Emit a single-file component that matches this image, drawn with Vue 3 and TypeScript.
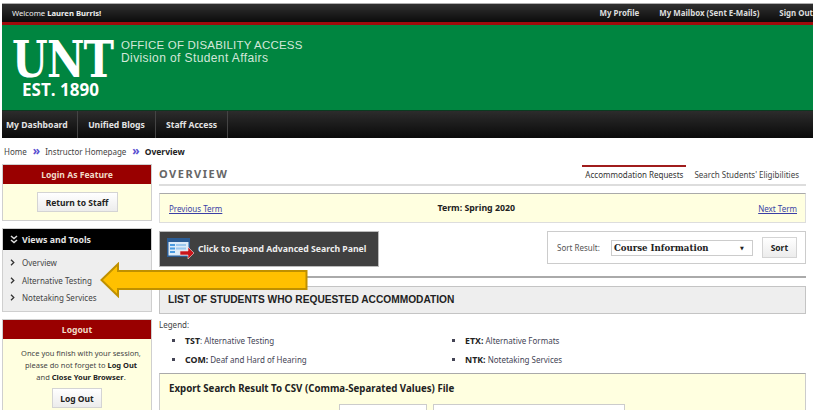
<script setup lang="ts">
const navItems: string[] = ['My Dashboard', 'Unified Blogs', 'Staff Access']
const toolItems: string[] = ['Overview', 'Alternative Testing', 'Notetaking Services']
const legendItems = [
  { code: 'TST', colon: ':', text: 'Alternative Testing' },
  { code: 'ETX:', colon: '', text: 'Alternative Formats' },
  { code: 'COM:', colon: '', text: 'Deaf and Hard of Hearing' },
  { code: 'NTK:', colon: '', text: 'Notetaking Services' },
]
</script>

<template>
  <div class="page">
    <header class="topbar">
      <span class="welcome">Welcome <b>Lauren Burris!</b></span>
      <nav class="toplinks">
        <a>My Profile</a>
        <a>My Mailbox (Sent E-Mails)</a>
        <a>Sign Out</a>
      </nav>
    </header>
    <section class="brand">
      <div class="logo">
        <div class="unt">UNT</div>
        <div class="est">EST. 1890</div>
      </div>
      <div class="office">
        <div>OFFICE OF DISABILITY ACCESS</div>
        <div>Division of Student Affairs</div>
      </div>
    </section>
    <nav class="mainnav">
      <a v-for="item in navItems" :key="item">{{ item }}</a>
    </nav>
    <div class="crumbs">
      <span>Home</span><i>»</i><span>Instructor Homepage</span><i>»</i><b>Overview</b>
    </div>

    <div class="columns">
      <aside class="side">
        <div class="panel login">
          <h3 class="red">Login As Feature</h3>
          <div class="pbody center"><button class="btn">Return to Staff</button></div>
        </div>
        <div class="panel tools">
          <h3 class="black"><span class="dbl">
            <svg width="8" height="9" viewBox="0 0 8 9"><path d="M1 1l3 2.500L7 1M1 5l3 2.500L7 5" fill="none" stroke="#ddd" stroke-width="1.500"/></svg>
          </span>Views and Tools</h3>
          <ul>
            <li v-for="item in toolItems" :key="item">
              <svg width="5" height="7" viewBox="0 0 5 7"><path d="M1 .8L3.800 3.500 1 6.200" fill="none" stroke="#333" stroke-width="1.300"/></svg>
              {{ item }}
            </li>
          </ul>
        </div>
        <div class="panel logout">
          <h3 class="red">Logout</h3>
          <div class="pbody lo">
            <p>Once you finish with your session,<br>please do not forget to <b>Log Out</b><br>and <b>Close Your Browser</b>.</p>
            <button class="btn small">Log Out</button>
          </div>
        </div>
      </aside>

      <main class="content">
        <div class="heading">
          <h2>OVERVIEW</h2>
          <div class="tabs">
            <span class="tab active">Accommodation Requests</span>
            <span class="tab">Search Students' Eligibilities</span>
          </div>
        </div>
        <div class="term">
          <a>Previous Term</a>
          <span class="termlabel"><b>Term:</b> <b>Spring 2020</b></span>
          <a>Next Term</a>
        </div>
        <div class="tools-row">
          <div class="expand">
            <svg width="28" height="22" viewBox="0 0 28 22">
              <rect x="0" y="0" width="23" height="19" fill="#2b5c94"/>
              <rect x="1.500" y="4" width="20" height="13.500" fill="#dcebf8"/>
              <rect x="3" y="6" width="5" height="2" fill="#4b9be0"/><rect x="9" y="6" width="10" height="2" fill="#9cc8ee"/>
              <rect x="3" y="9.500" width="5" height="2" fill="#4b9be0"/><rect x="9" y="9.500" width="10" height="2" fill="#9cc8ee"/>
              <rect x="3" y="13" width="5" height="2" fill="#4b9be0"/>
              <path d="M13 13h8v-4l6 6-6 6v-4h-8z" fill="#c9151b" stroke="#f1e4e4" stroke-width=".6"/>
            </svg>
            <span>Click to Expand Advanced Search Panel</span>
          </div>
          <div class="sort">
            <label>Sort Result:</label>
            <div class="select"><span>Course Information</span><em>▼</em></div>
            <button class="btn sortbtn">Sort</button>
          </div>
        </div>
        <div class="rule"></div>
        <div class="listhead">LIST OF STUDENTS WHO REQUESTED ACCOMMODATION</div>
        <div class="legend">Legend:</div>
        <ul class="legend-grid">
          <li v-for="l in legendItems" :key="l.code"><b>{{ l.code }}</b>{{ l.colon }} {{ l.text }}</li>
        </ul>
        <div class="export">
          <h4>Export Search Result To CSV (Comma-Separated Values) File</h4>
          <div class="inputs"><div class="inp a"></div><div class="inp b"></div></div>
        </div>
      </main>
    </div>

    <svg class="arrow" width="208" height="36" viewBox="0 0 208 36">
      <path d="M1.500 18L18 2v7h188.500v18H18v7z" fill="#ffc000" stroke="#bf9000" stroke-width="2"/>
    </svg>
  </div>
</template>

<style scoped>
.page {
  position: relative;
  width: 813px;
  height: 410px;
  overflow: hidden;
  background: #fff;
  padding-top: 4px;
  box-sizing: border-box;
  font-family: "Noto Sans", sans-serif;
  font-size: 8px;
  color: #333;
}
.topbar {
  height: 18px;
  margin-left: 2px;
  padding: 0 0 0 10px;
  display: flex;
  justify-content: space-between;
  align-items: center;
  background: linear-gradient(#303030, #0c0c0c);
  box-shadow: 0 -1px #b0b0b0;
  color: #f0f0f0;
  border-bottom: 3px solid #a00b0b;
}
.welcome { font-size: 7.700px; }
.toplinks { display: flex; gap: 20px; font-weight: 700; color: #ddd; font-size: 7.900px; }
.brand {
  height: 85px;
  margin-left: 2px;
  background: #008540;
  display: flex;
  color: #fff;
}
.logo { width: 109px; padding: 12px 0 0 10px; box-sizing: border-box; flex: none; }
.unt {
  font-family: "DejaVu Serif", serif;
  font-weight: 700;
  font-size: 50px;
  line-height: 45px;
  height: 45px;
  letter-spacing: -1px;
  transform: scaleX(.82);
  transform-origin: left center;
  white-space: nowrap;
}
.est {
  font-family: "Open Sans", sans-serif;
  font-weight: 700;
  font-size: 17px;
  line-height: 16px;
  margin-left: 10px;
  white-space: nowrap;
}
.office {
  margin-left: 10px;
  padding-top: 14px;
  font-family: "Liberation Sans", sans-serif;
  font-size: 11.500px;
  line-height: 13px;
  color: #d3e8da;
  white-space: nowrap;
}
.office div:first-child { letter-spacing: .2px; }
.office div:last-child { font-size: 12px; letter-spacing: .4px; }
.mainnav {
  height: 28px;
  margin-left: 2px;
  display: flex;
  background: linear-gradient(#2c2c2c, #0a0a0a);
  border-top: 1px solid #0b3a20;
  box-sizing: border-box;
  font-weight: 700;
  font-size: 8.600px;
  color: #e4e4e4;
}
.mainnav a {
  display: flex;
  align-items: center;
  justify-content: center;
  width: 76px;
  box-sizing: border-box;
  border-right: 1px solid #444;
}
.mainnav a:first-child { justify-content: flex-start; padding-left: 4px; }
.mainnav a:nth-child(2) { width: 78px; }
.mainnav a:nth-child(3) { width: 72px; }
.crumbs {
  height: 26px;
  padding-left: 4px;
  display: flex;
  align-items: center;
  color: #444;
}
.crumbs i { font-style: normal; font-weight: 700; color: #5a4fd0; margin: 0 5px 0 6px; font-size: 12px; line-height: 8px; }
.crumbs b { color: #222; font-size: 8.500px; }
.columns { display: flex; margin-left: 2px; }
.side { width: 150px; flex: none; display: flex; flex-direction: column; gap: 7px; }
.panel { border: 1px solid #cfcfcf; box-sizing: border-box; }
.panel h3 {
  margin: 0;
  font-size: 8.600px;
  font-weight: 700;
  color: #f1dcc8;
  display: flex;
  align-items: center;
  justify-content: center;
}
.red { background: #990000; height: 19px; }
.pbody { background: #ffffe0; }
.center { height: 36px; display: flex; align-items: center; justify-content: center; }
.login { height: 57px; }
.btn {
  font-family: inherit;
  font-weight: 700;
  font-size: 8.500px;
  color: #222;
  background: linear-gradient(#fff, #ececec);
  border: 1px solid #d4d4d4;
  padding: 0;
  width: 81px;
  height: 20px;
}
.tools { height: 84px; background: #eee; }
.panel h3.black {
  background: #000;
  height: 21px;
  justify-content: flex-start;
  padding-left: 7px;
  gap: 4px;
  font-size: 8.800px;
  color: #e6e6e6;
}
.dbl { display: flex; }
.tools ul { list-style: none; margin: 0; padding: 4px 0 0 7px; }
.tools li { height: 17.500px; display: flex; align-items: center; gap: 7px; color: #444; }
.logout { height: 100px; }
.lo { height: 80px; text-align: center; }
.lo p { margin: 0; padding: 8px 0 0 8px; line-height: 12px; color: #444; font-size: 7.500px; }
.lo p b { color: #222; }
.small { width: 50px; height: 20px; margin-top: 5px; }
.content { width: 647px; margin-left: 7px; flex: none; }
.heading {
  height: 27px;
  margin-top: -7px;
  display: flex;
  justify-content: space-between;
  align-items: flex-end;
  border-bottom: 2px solid #ddd;
}
h2 {
  margin: 0 0 3px;
  font-size: 11px;
  font-weight: 700;
  color: #666;
  letter-spacing: 1.500px;
}
.tabs { display: flex; gap: 5px; }
.tab { padding: 4px 7px 0 3px; height: 19px; box-sizing: border-box; color: #444; white-space: nowrap; }
.tab.active { border-top: 2px solid #a01c1c; padding: 2px 3px 0; color: #333; }
.term {
  margin-top: 7px;
  height: 30px;
  box-sizing: border-box;
  border: 1px solid #aaa;
  border-color: #aaa #ddd #ddd #ddd;
  background: #ffffe0;
  display: flex;
  justify-content: space-between;
  align-items: center;
  padding: 0 8px 0 9px;
  color: #222;
}
.term a { color: #3b3fa5; text-decoration: underline; }
.termlabel { margin-right: 28px; font-size: 8.800px; }
.tools-row {
  margin-top: 8px;
  display: flex;
  justify-content: space-between;
  align-items: flex-start;
}
.expand {
  width: 220px;
  height: 36px;
  box-sizing: border-box;
  background: #404040;
  border: 1px solid #bbb;
  display: flex;
  align-items: center;
  padding-left: 7px;
  gap: 3px;
  color: #eee;
  font-weight: 700;
  font-size: 8.700px;
}
.sort {
  width: 259px;
  height: 33px;
  box-sizing: border-box;
  border: 1px solid #ccc;
  display: flex;
  align-items: center;
  padding-left: 9px;
  color: #555;
}
.select {
  width: 142px;
  height: 16px;
  margin-left: 11px;
  box-sizing: border-box;
  border: 1px solid #ccc;
  display: flex;
  align-items: center;
  justify-content: space-between;
  padding: 0 8px 0 2px;
  font-family: "DejaVu Serif", serif;
  font-weight: 700;
  font-size: 8.600px;
  color: #222;
}
.select em { font-style: normal; font-size: 5px; font-family: "DejaVu Sans", sans-serif; }
.sortbtn { width: 35px; height: 21px; margin-left: 9px; }
.rule { height: 2px; background: #aaa; margin-top: 9px; }
.listhead {
  margin-top: 8px;
  height: 28px;
  box-sizing: border-box;
  background: #eee;
  border: 1px solid #c4c4c4;
  display: flex;
  align-items: center;
  padding: 0 0 2px 8px;
  font-family: "Liberation Sans", sans-serif;
  font-weight: 700;
  font-size: 10.200px;
  color: #222;
}
.legend { margin-top: 6px; line-height: 10px; color: #444; }
.legend-grid {
  list-style: square;
  display: grid;
  grid-template-columns: 280px 280px;
  row-gap: 9px;
  margin: 6px 0 0;
  padding: 0 0 0 26px;
  line-height: 10px;
}
.legend-grid li { color: #445; }
.legend-grid b { color: #222; font-size: 8.800px; }
.export {
  margin-top: 8px;
  height: 60px;
  box-sizing: border-box;
  background: #ffffe0;
  border: 1px solid #ccc;
  border-top-color: #aaa;
  padding: 9px 0 0 9px;
}
h4 { margin: 0; font-size: 9.700px; line-height: 12px; color: #222; font-weight: 700; }
.inputs { display: flex; gap: 6px; margin: 9px 0 0 170px; }
.inp { height: 20px; background: #fff; border: 1px solid #ccc; box-sizing: border-box; }
.a { width: 88px; }
.b { width: 192px; }
.arrow { position: absolute; left: 100px; top: 262px; }
</style>
